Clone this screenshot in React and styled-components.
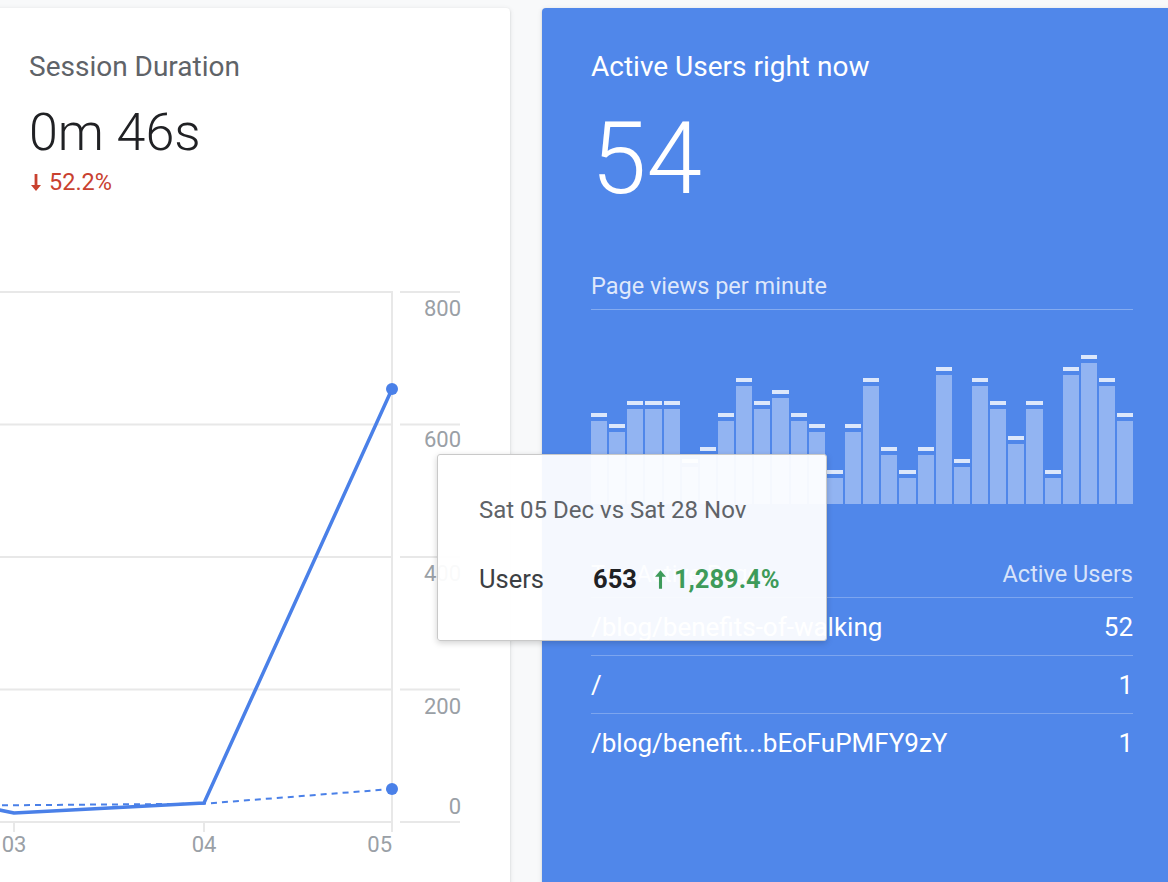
import styled, { createGlobalStyle } from 'styled-components'

const GlobalStyle = createGlobalStyle`
    html, body {
        margin: 0;
        padding: 0;
        background: #f8f9fa;
        overflow: hidden;
    }
    body {
        font-family: Roboto, "Noto Sans", "Liberation Sans", sans-serif;
    }
`

const Page = styled.div`
    position: relative;
    display: flex;
    align-items: flex-start;
    gap: 32px;
    padding-top: 8px;
    margin-left: -20px;
    width: 1240px;
    height: 882px;
`

const Card = styled.section`
    flex: 0 0 ${(p) => p.$width}px;
    box-sizing: border-box;
    height: 900px;
    padding: 43px 49px 0;
    border-radius: 4px;
    background: ${(p) => (p.$blue ? '#5087ea' : '#ffffff')};
    color: ${(p) => (p.$blue ? '#ffffff' : '#202124')};
    box-shadow: 0 1px 2px rgba(60, 64, 67, 0.18), 0 1px 4px 1px rgba(60, 64, 67, 0.08);
`

const Title = styled.div`
    font-size: 28px;
    line-height: 32px;
    font-weight: 400;
    color: ${(p) => (p.$blue ? '#ffffff' : '#5f6368')};
`

const Metric = styled.div`
    margin-top: 24px;
    font-size: 52px;
    line-height: 52px;
    font-weight: 300;
    color: #202124;
`

const Delta = styled.div`
    margin-top: 10px;
    display: flex;
    align-items: center;
    gap: 8px;
    padding-left: 2px;
    font-size: ${(p) => (p.$up ? 25.5 : 23.5)}px;
    line-height: 26px;
    color: ${(p) => (p.$up ? '#3e9b5a' : '#c9412f')};
    font-weight: ${(p) => (p.$up ? 700 : 400)};
`

const ChartSvg = styled.svg`
    display: block;
    margin-top: 86px;
    margin-left: -49px;
    overflow: visible;
`

const BigNumber = styled.div`
    margin-top: 26px;
    font-size: 100px;
    line-height: 100px;
    font-weight: 300;
`

const SubHeading = styled.div`
    margin-top: 63px;
    padding-bottom: 9px;
    font-size: 23.5px;
    line-height: 28px;
    color: rgba(255, 255, 255, 0.82);
    border-bottom: 1px solid rgba(255, 255, 255, 0.3);
`

const Bars = styled.div`
    display: flex;
    align-items: flex-end;
    gap: 2px;
    height: 194px;
`

const Bar = styled.div`
    flex: 1;
    display: flex;
    flex-direction: column;
    gap: 4px;
`

const BarCap = styled.div`
    height: 4px;
    background: rgba(255, 255, 255, 0.8);
`

const BarBody = styled.div`
    background: rgba(255, 255, 255, 0.38);
`

const Table = styled.div`
    margin-top: 57px;
`

const HeadRow = styled.div`
    display: flex;
    justify-content: space-between;
    padding-bottom: 10px;
    font-size: 23.5px;
    line-height: 26px;
    color: rgba(255, 255, 255, 0.78);
`

const Row = styled.div`
    display: flex;
    justify-content: space-between;
    align-items: center;
    height: 57px;
    border-top: 1px solid rgba(255, 255, 255, 0.25);
    font-size: 26px;
    color: #ffffff;
`

const Tooltip = styled.div`
    position: absolute;
    left: 457px;
    top: 454px;
    width: 390px;
    height: 187px;
    box-sizing: border-box;
    padding: 41px 0 0 41px;
    background: rgba(255, 255, 255, 0.94);
    border: 1px solid #c9c9c9;
    border-radius: 3px;
    box-shadow: 0 2px 6px rgba(0, 0, 0, 0.18);
`

const TipDate = styled.div`
    font-size: 24px;
    line-height: 28px;
    color: #5f6368;
`

const TipRow = styled.div`
    margin-top: 41px;
    display: flex;
    align-items: center;
    font-size: 25.5px;
    line-height: 28px;
`

const TipLabel = styled.span`
    width: 114px;
    color: #3c4043;
`

const TipValue = styled.span`
    font-weight: 700;
    color: #202124;
    margin-right: 18px;
`

const Arrow = ({ up, color, width = 10, height = 17 }) => (
    <svg width={width} height={height} viewBox="0 0 10 17">
        {up ? (
            <path d="M5 0 L10 6 H6.4 V17 H3.6 V6 H0 Z" fill={color} />
        ) : (
            <path d="M3.6 0 H6.4 V11 H10 L5 17 L0 11 H3.6 Z" fill={color} />
        )}
    </svg>
)

const gridY = [11, 143.5, 276, 408.5, 541]
const axisLabels = [
    { y: 35, t: '800' },
    { y: 166, t: '600' },
    { y: 300, t: '400' },
    { y: 433, t: '200' },
    { y: 533, t: '0' },
]

function LineChart() {
    const blue = '#4a80e8'
    const label = { fontSize: 22, fill: '#9aa0a6', fontFamily: 'Roboto, sans-serif' }
    return (
        <ChartSvg width="481" height="600" viewBox="0 0 481 600">
            {gridY.map((y) => (
                <g key={y}>
                    <line x1="0" x2="412" y1={y} y2={y} stroke="#e8e8e8" strokeWidth="2" />
                    <line x1="420" x2="480" y1={y} y2={y} stroke="#e8e8e8" strokeWidth="2" />
                </g>
            ))}
            <line x1="412" x2="412" y1="10" y2="551" stroke="#e8e8e8" strokeWidth="2" />
            <line x1="34" x2="34" y1="541" y2="551" stroke="#e8e8e8" strokeWidth="2" />
            <line x1="224" x2="224" y1="541" y2="551" stroke="#e8e8e8" strokeWidth="2" />
            {axisLabels.map((l) => (
                <text key={l.t} x="481" y={l.y} textAnchor="end" {...label}>
                    {l.t}
                </text>
            ))}
            <text x="34" y="571" textAnchor="middle" {...label}>03</text>
            <text x="224" y="571" textAnchor="middle" {...label}>04</text>
            <text x="412" y="571" textAnchor="end" {...label}>05</text>
            <polyline points="0,524.5 224,522.7 412,508" fill="none" stroke={blue} strokeWidth="2" strokeDasharray="6 5" />
            <polyline points="0,525 34,532 224,522 412,108" fill="none" stroke={blue} strokeWidth="3.5" strokeLinejoin="round" />
            <circle cx="412" cy="108" r="6" fill={blue} />
            <circle cx="412" cy="508" r="6" fill={blue} />
        </ChartSvg>
    )
}

const barValues = [7, 6, 8, 8, 8, 3, 4, 7, 10, 8, 9, 7, 6, 2, 6, 10, 4, 2, 4, 11, 3, 10, 8, 5, 8, 2, 11, 12, 10, 7]

const pages = [
    { path: '/blog/benefits-of-walking', users: 52 },
    { path: '/', users: 1 },
    { path: '/blog/benefit...bEoFuPMFY9zY', users: 1 },
]

export default function App() {
    return (
        <>
            <GlobalStyle />
            <Page>
                <Card $width={530}>
                    <Title>Session Duration</Title>
                    <Metric>0m 46s</Metric>
                    <Delta>
                        <Arrow color="#c9412f" />
                        52.2%
                    </Delta>
                    <LineChart />
                </Card>
                <Card $width={640} $blue>
                    <Title $blue>Active Users right now</Title>
                    <BigNumber>54</BigNumber>
                    <SubHeading>Page views per minute</SubHeading>
                    <Bars>
                        {barValues.map((v, i) => (
                            <Bar key={i}>
                                <BarCap />
                                <BarBody style={{ height: 11.5 * v + 3 }} />
                            </Bar>
                        ))}
                    </Bars>
                    <Table>
                        <HeadRow>
                            <span>Top Active Pages</span>
                            <span>Active Users</span>
                        </HeadRow>
                        {pages.map((p) => (
                            <Row key={p.path}>
                                <span>{p.path}</span>
                                <span>{p.users}</span>
                            </Row>
                        ))}
                    </Table>
                </Card>
                <Tooltip>
                    <TipDate>Sat 05 Dec vs Sat 28 Nov</TipDate>
                    <TipRow>
                        <TipLabel>Users</TipLabel>
                        <TipValue>653</TipValue>
                        <Delta as="span" $up style={{ marginTop: 0, paddingLeft: 0 }}>
                            <Arrow up color="#3e9b5a" width={11} height={19} />
                            1,289.4%
                        </Delta>
                    </TipRow>
                </Tooltip>
            </Page>
        </>
    )
}
